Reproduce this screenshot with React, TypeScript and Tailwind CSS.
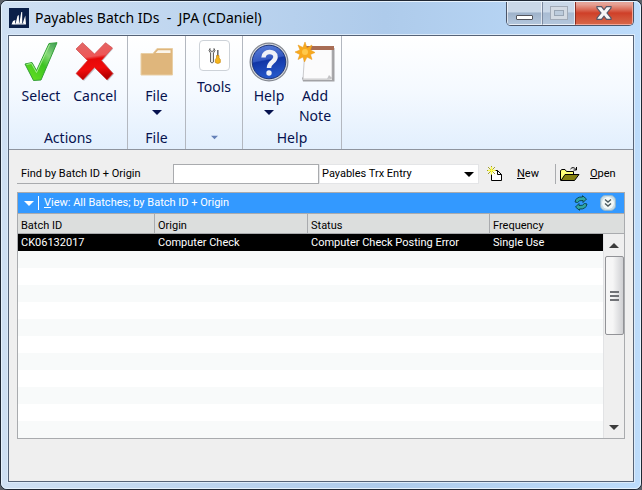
import type { ReactNode } from "react";

const columns = [
  { name: "Batch ID", width: "w-[137px]" },
  { name: "Origin", width: "w-[153px]" },
  { name: "Status", width: "w-[182px]" },
  { name: "Frequency", width: "" },
];

const batches = [["CK06132017", "Computer Check", "Computer Check Posting Error", "Single Use"]];

const emptyRows = Array.from({ length: 11 }, (_, i) => i);

function AppLogo() {
  return (
    <svg width="20" height="20" viewBox="0 0 20 20" aria-hidden="true">
      <rect width="20" height="20" fill="#0a1f49" />
      <path d="M2.500 16.500L4 13L6.300 12L6 16ZM6.500 16L8.500 8L9.800 7L10 15.500Z" fill="#fff" />
      <path d="M10.300 15.500L12.300 4L13.200 4L13.200 15.500Z" fill="#fff" />
      <path d="M13.700 15.500L16.300 7.500L17 16.500Z" fill="#fff" />
      <path d="M3 16.500Q10 14 17 16.500Z" fill="#fff" />
    </svg>
  );
}

function CheckIcon() {
  return (
    <svg width="34" height="40" viewBox="0 0 34 40" aria-hidden="true">
      <defs>
        <linearGradient id="check" x1="1" y1="0" x2="0.3" y2="1">
          <stop offset="0" stopColor="#3d9a55" />
          <stop offset="0.35" stopColor="#86d878" />
          <stop offset="0.6" stopColor="#3cc423" />
          <stop offset="1" stopColor="#5fdc20" />
        </linearGradient>
      </defs>
      <path d="M1 22L8 20.5L12.5 28.5L25 1.5L33 .7L17 38L9.500 38.500Z" fill="url(#check)" stroke="#35a03a" strokeWidth="1" strokeLinejoin="round" />
      <path d="M2.500 22.500L7.500 21.500L12.500 30.500L25.700 2.500" fill="none" stroke="#a6ec90" strokeWidth="1" />
    </svg>
  );
}

function CrossIcon() {
  return (
    <svg width="40" height="40" viewBox="0 0 40 40" aria-hidden="true">
      <defs>
        <linearGradient id="cross" x1="0" y1="0" x2="0.15" y2="1">
          <stop offset="0" stopColor="#e06a6a" />
          <stop offset="0.42" stopColor="#ee5656" />
          <stop offset="0.5" stopColor="#e60808" />
          <stop offset="0.75" stopColor="#f00c0c" />
          <stop offset="1" stopColor="#b80000" />
        </linearGradient>
      </defs>
      <path d="M8 2L20 13L31 2L38 7L27.500 19L39 32L33 39L20.500 26.500L9 39L2 32.500L13 19.500L2 8Z" fill="#8a8f98" opacity=".45" />
      <path d="M7.500 .7L19.500 12L30.500 .7L37.500 6L26.500 18.500L38 31.500L32 38L19.500 25.500L8 38L1 31.500L12.500 18.500L1 7Z" fill="url(#cross)" stroke="#d04a4a" strokeWidth=".7" strokeLinejoin="round" />
    </svg>
  );
}

function FolderIcon() {
  return (
    <svg width="34" height="30" viewBox="0 0 34 30" aria-hidden="true">
      <path d="M1 6.500H13L17 1.500H32.500V28H1Z" fill="#dfb67c" stroke="#e9cfa5" strokeWidth="1" strokeLinejoin="round" />
      <path d="M15.500 6L18 3.200H30.500V6Z" fill="#fbf5ea" />
    </svg>
  );
}

function ToolsIcon() {
  return (
    <svg width="13" height="18" viewBox="0 0 13 18" aria-hidden="true">
      <path d="M2 1.500L1 3.500L2.500 6V15Q4 17 5.500 15V6L7 3.500L6 1.500V3.500L4 4.500L2 3.500Z" fill="#e8e8e8" stroke="#555" strokeWidth=".9" />
      <path d="M9.800 3V9" stroke="#666" strokeWidth="1.500" />
      <path d="M8.500 8.500H11V11L12.300 12.500V15.500Q9.800 17.500 7.300 15.500V12.500L8.500 11Z" fill="#f5b51b" stroke="#c88a10" strokeWidth=".7" />
    </svg>
  );
}

function HelpIcon() {
  return (
    <svg width="40" height="40" viewBox="0 0 40 40" aria-hidden="true">
      <defs>
        <linearGradient id="help" x1="0" y1="0" x2="0.2" y2="1">
          <stop offset="0" stopColor="#5c80d8" />
          <stop offset="0.48" stopColor="#3459c2" />
          <stop offset="0.52" stopColor="#1236a6" />
          <stop offset="1" stopColor="#2456c8" />
        </linearGradient>
      </defs>
      <circle cx="20" cy="20" r="19.500" fill="#82868f" />
      <circle cx="20" cy="20" r="18.300" fill="#d4d7dc" />
      <circle cx="20" cy="20" r="16.800" fill="url(#help)" stroke="#1b3377" strokeWidth="1" />
      <path d="M14.500 15.500C14.500 8.500 26.500 8 26.500 15C26.500 20 20 19.500 20 26" fill="none" stroke="#f0f2f7" strokeWidth="4.500" />
      <circle cx="20" cy="31" r="2.700" fill="#f0f2f7" />
    </svg>
  );
}

function NoteIcon() {
  return (
    <svg width="40" height="40" viewBox="0 0 40 40" aria-hidden="true">
      <path d="M37 6H39.500V39.500H8L7 36Z" fill="#a2a2a5" />
      <path d="M9 35H37V38H8Z" fill="#e4e4e4" />
      <path d="M10 7H37V36L34 37H8Z" fill="#fbfbfc" stroke="#b5b5b7" strokeWidth=".7" />
      <path d="M11 4H39V8H11Z" fill="#a86d55" />
      <path d="M37 36L32 37L34 33Z" fill="#c4c4c6" />
      <path d="M10 0L12 6L17 3L15.500 8L20 10.500L15.500 12.500L17 17.500L12 15L9.500 20L8 15L3 17.500L4.800 12.500L0 10L5 8L3 3L8 5.500Z" fill="#f8a91d" stroke="#e79718" strokeWidth=".5" />
      <circle cx="10" cy="10" r="3" fill="#ffc94a" />
    </svg>
  );
}

function NewIcon() {
  return (
    <svg width="16" height="16" viewBox="0 0 16 16" aria-hidden="true">
      <path d="M4.500 4.500H10.500L14.500 8.500V14.500H4.500Z" fill="#fff" stroke="#000" />
      <path d="M10.500 4.500V8.500H14.500" fill="none" stroke="#000" />
      <path d="M4.500 0V9M0 4.500H9M1 1L8 8M8 1L1 8" stroke="#a5a22a" strokeWidth="1" />
      <path d="M4.500 1V8M1 4.500H8" stroke="#ffff4d" strokeWidth="1.500" />
    </svg>
  );
}

function OpenIcon() {
  return (
    <svg width="20" height="16" viewBox="0 0 20 16" aria-hidden="true">
      <path d="M.5 14.500V4.500L2 3.500H5L6.500 5.500H13.500V8.500" fill="#ffff78" stroke="#000" />
      <path d="M1 14.500L5 8.500H19L14.500 14.500Z" fill="#858012" stroke="#000" />
      <path d="M10.500 3Q13 0 16 3.500M16.500 1V4H13.500" fill="none" stroke="#000" />
    </svg>
  );
}

function RefreshIcon() {
  return (
    <svg width="14" height="16" viewBox="0 0 14 16" aria-hidden="true">
      <path d="M1 7Q2 1.500 8.500 2L8.500 .7L12.500 4L9 7.500V5.500Q5 5 3.500 7.500Z" fill="#2fa5a0" stroke="#073f4b" strokeWidth=".9" />
      <path d="M13 9Q12 14.500 5.500 14L5.500 15.300L1.500 12L5 8.500V10.500Q9 11 10.500 8.500Z" fill="#2fa5a0" stroke="#073f4b" strokeWidth=".9" />
    </svg>
  );
}

function ExpandIcon() {
  return (
    <svg width="16" height="16" viewBox="0 0 16 16" aria-hidden="true">
      <rect x=".5" y=".5" width="15" height="15" rx="5" fill="#c9dde6" stroke="#8fb4cc" />
      <circle cx="8" cy="8" r="6" fill="#f4f9f7" />
      <path d="M5 4.500L8 7L11 4.500M5 8.500L8 11L11 8.500" fill="none" stroke="#4a5a5e" strokeWidth="1.400" />
    </svg>
  );
}

function Arrow({ className = "", up = false }: { className?: string; up?: boolean }) {
  return (
    <svg width="10" height="5" viewBox="0 0 10 5" className={className} fill="currentColor" aria-hidden="true">
      <path d={up ? "M0 5H10L5 0Z" : "M0 0H10L5 5Z"} />
    </svg>
  );
}

function RibbonButton({ icon, label, className = "", menu = false }: { icon: ReactNode; label: ReactNode; className?: string; menu?: boolean }) {
  return (
    <button type="button" className={`flex flex-col items-center pt-[2px] ${className}`}>
      <span className="flex h-10 items-center">{icon}</span>
      <span className="mt-1 leading-5">{label}</span>
      {menu && <Arrow className="mt-1" />}
    </button>
  );
}

function RibbonGroup({ label, width, children }: { label: ReactNode; width: string; children: ReactNode }) {
  return (
    <section className={`flex shrink-0 flex-col border-r border-[#b3b8c0] pt-1 ${width}`}>
      <div className="flex h-[86px] items-start justify-center">{children}</div>
      <div className="flex flex-1 items-center justify-center leading-5">{label}</div>
    </section>
  );
}

function TitleBar() {
  return (
    <header className="flex h-[33px] items-start justify-between pl-[7px] pr-[6px]">
      <div className="flex items-center gap-[6px] pt-[6px]">
        <AppLogo />
        <h1 className="whitespace-pre text-[14px] leading-5 text-black">Payables Batch IDs  -  JPA (CDaniel)</h1>
      </div>
      <div className="flex h-[24px] overflow-hidden rounded-b-[5px] border border-t-0 border-[#4b5568]">
        <button type="button" aria-label="Minimize" className="flex w-[35px] items-end justify-center border border-t-0 border-white/60 bg-linear-to-b from-[#cad8e8] from-45% via-[#9eb2ca] via-50% to-[#b3c6dc] pb-1">
          <span className="h-[5px] w-[17px] rounded-[1px] border border-[#52545c] bg-white" />
        </button>
        <button type="button" aria-label="Maximize" disabled className="flex w-[33px] items-center justify-center border border-t-0 border-l-[#7c8aa0] border-white/60 bg-linear-to-b from-[#cad8e8] from-45% via-[#a9bcd3] via-50% to-[#b3c6dc]">
          <span className="flex h-[14px] w-[18px] items-center justify-center border border-[#a1aab7] bg-[#d3dae3]">
            <span className="h-[6px] w-[10px] border border-[#99a5b4] bg-[#bccbdc]" />
          </span>
        </button>
        <button type="button" aria-label="Close" className="flex w-[58px] items-center justify-center border border-t-0 border-l-[#8a2c22] border-[#f3a595] bg-linear-to-b from-[#e5a397] from-10% via-[#cf3f28] via-50% to-[#d66547]">
          <svg width="16" height="14" viewBox="0 0 16 14" aria-hidden="true">
            <path d="M1 .7H5.500L8 3.800L10.500 .7H15V2L11 7L15 12V13.300H10.500L8 10.200L5.500 13.300H1V12L5 7L1 2Z" fill="#f7f7f7" stroke="#545768" strokeWidth="1.200" />
          </svg>
        </button>
      </div>
    </header>
  );
}

function Ribbon() {
  return (
    <nav className="flex h-[114px] border-b border-[#8e949e] bg-linear-to-b from-white via-[#f4f9ff] to-[#e2effd] text-[14px] text-[#06124f]">
      <RibbonGroup label="Actions" width="w-[119px]">
        <RibbonButton icon={<CheckIcon />} label="Select" className="w-[54px]" />
        <RibbonButton icon={<CrossIcon />} label="Cancel" className="w-[54px]" />
      </RibbonGroup>
      <RibbonGroup label="File" width="w-[58px]">
        <RibbonButton icon={<FolderIcon />} label="File" menu />
      </RibbonGroup>
      <RibbonGroup label={<Arrow className="w-[7px] text-[#6581b8]" />} width="w-[57px]">
        <button type="button" className="flex flex-col items-center">
          <span className="flex size-[31px] items-center justify-center rounded-[4px] border border-[#cdd2d8] bg-white">
            <ToolsIcon />
          </span>
          <span className="mt-[6px] leading-5">Tools</span>
        </button>
      </RibbonGroup>
      <RibbonGroup label="Help" width="w-[99px]">
        <RibbonButton icon={<HelpIcon />} label="Help" className="w-[46px]" menu />
        <RibbonButton icon={<NoteIcon />} label={<>Add<br />Note</>} className="w-[46px]" />
      </RibbonGroup>
    </nav>
  );
}

function FindBar() {
  return (
    <form className="flex h-5 items-stretch">
      <label htmlFor="find" className="flex w-[156px] items-center border-b border-[#a9abae] pl-1">
        Find by Batch ID + Origin
      </label>
      <input id="find" type="text" className="w-[146px] border border-[#a9abae] bg-white px-1 outline-none" />
      <div className="relative mr-2 flex flex-1">
        <select aria-label="Origin" className="w-full appearance-none border border-[#e4e5e7] bg-white pl-[2px] outline-none">
          <option>Payables Trx Entry</option>
        </select>
        <Arrow className="pointer-events-none absolute top-2 right-[5px]" />
      </div>
      <button type="button" className="flex w-[68px] items-center gap-[14px]">
        <NewIcon />
        <span><u>N</u>ew</span>
      </button>
      <button type="button" className="flex w-[70px] items-center gap-[10px] border-l border-[#a9abae] pl-1">
        <OpenIcon />
        <span><u>O</u>pen</span>
      </button>
    </form>
  );
}

function ScrollBar() {
  return (
    <div className="flex h-51 flex-col items-center border-l border-[#e2e3e5] bg-[#efefef]">
      <button type="button" aria-label="Scroll up" className="flex h-[22px] w-full items-center justify-center text-[#3c3c3c]">
        <Arrow up />
      </button>
      <div className="flex h-[79px] w-[19px] flex-col items-center justify-center gap-[2px] rounded-[2px] border border-[#929397] bg-linear-to-r from-[#f6f6f6] from-40% to-[#cfd0d3]">
        <span className="h-[2px] w-[9px] bg-[#707276]" />
        <span className="h-[2px] w-[9px] bg-[#707276]" />
        <span className="h-[2px] w-[9px] bg-[#707276]" />
      </div>
      <button type="button" aria-label="Scroll down" className="mt-auto flex h-[22px] w-full items-center justify-center text-[#3c3c3c]">
        <Arrow />
      </button>
    </div>
  );
}

function BatchList() {
  return (
    <section className="mt-2 border border-[#a9abae]">
      <div className="flex h-5 items-center bg-[#3399ff] pr-2 pl-[6px] text-white">
        <button type="button" aria-label="View menu" className="mr-1">
          <Arrow />
        </button>
        <span className="mr-[5px] h-[14px] w-px bg-white" />
        <button type="button"><u>V</u>iew: All Batches; by Batch ID + Origin</button>
        <button type="button" aria-label="Refresh" className="mr-3 ml-auto"><RefreshIcon /></button>
        <button type="button" aria-label="Expand"><ExpandIcon /></button>
      </div>
      <table className="w-full table-fixed border-separate border-spacing-0 text-left">
        <colgroup>
          {columns.map((c) => (
            <col key={c.name} className={c.width} />
          ))}
          <col className="w-[21px]" />
        </colgroup>
        <thead>
          <tr className="h-[21px] bg-[#dcdedd]">
            {columns.map((c, i) => (
              <th
                key={c.name}
                colSpan={i === columns.length - 1 ? 2 : 1}
                className={`border-t border-b border-[#a9abae] p-0 pt-[5px] pl-[3px] font-normal ${i < columns.length - 1 ? "border-r" : ""}`}
              >
                {c.name}
              </th>
            ))}
          </tr>
        </thead>
        <tbody>
          {batches.map((row) => (
            <tr key={row[0]} className="h-[17px] bg-black text-white">
              {row.map((cell) => (
                <td key={cell} className="p-0 pl-[3px]">{cell}</td>
              ))}
              <td rowSpan={12} className="p-0 align-top">
                <ScrollBar />
              </td>
            </tr>
          ))}
          {emptyRows.map((i) => (
            <tr key={i} className="h-[17px] odd:bg-white even:bg-[#f8fafa]">
              <td colSpan={4} className="p-0" />
            </tr>
          ))}
        </tbody>
      </table>
    </section>
  );
}

export default function App() {
  return (
    <div className="flex min-h-screen flex-col bg-[#5b6068] font-['Noto_Sans','Open_Sans',sans-serif]">
      <div className="flex flex-1 flex-col rounded-[7px] border border-[#1f2733] bg-[#b5d3f0]">
        <div className="flex flex-1 flex-col rounded-[6px] border border-[#e6f2fd] bg-linear-to-r from-[#cfe0f3] via-[#aecbeb] via-60% to-[#bddcfb] px-[6px] pb-[6px]">
          <div className="-mx-[6px]">
            <TitleBar />
          </div>
          <main className="flex flex-1 flex-col border border-[#566377] bg-[#efefef] shadow-[0_0_0_1px_#dcebfa]">
            <Ribbon />
            <div className="px-2 pt-[14px] pb-10 font-[Roboto,'Liberation_Sans',sans-serif] text-[11px] leading-3 text-black">
              <FindBar />
              <BatchList />
            </div>
          </main>
        </div>
      </div>
    </div>
  );
}
